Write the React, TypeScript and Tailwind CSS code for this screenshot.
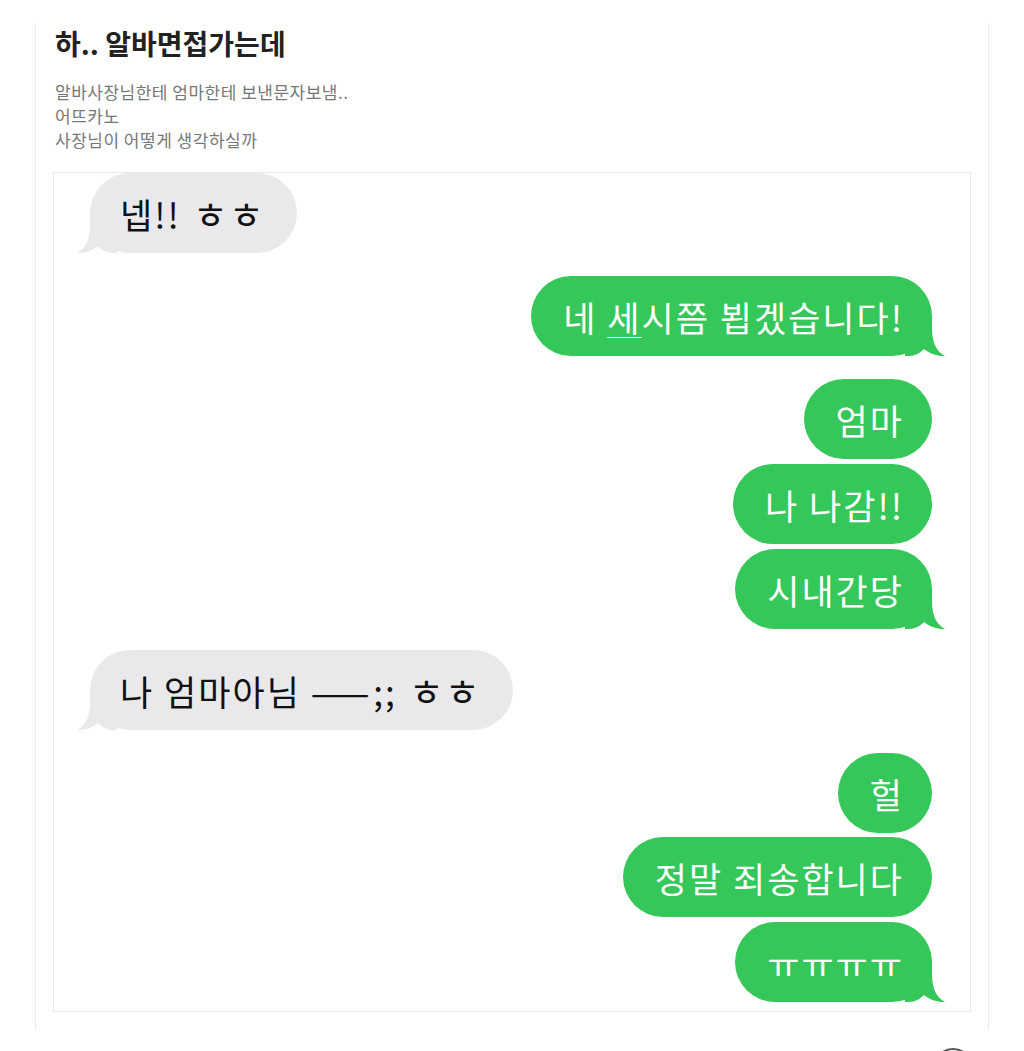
import type { ReactNode } from "react";

type Side = "left" | "right";

type Message = {
  side: Side;
  text: ReactNode;
  gap: string;
};

// compatibility jamo render small in Noto, so the laughing ㅎㅎ gets its own size
function Haha() {
  return <span className="ml-[12px] text-[38px] tracking-[1px]">ㅎㅎ</span>;
}

const messages: Message[] = [
  {
    side: "left",
    text: (
      <>
        넵!!
        <Haha />
      </>
    ),
    gap: "mt-0",
  },
  {
    side: "right",
    text: (
      <>
        네 <span className="underline decoration-1 underline-offset-[5px]">세</span>시쯤 뵙겠습니다!
      </>
    ),
    gap: "mt-[23px]",
  },
  { side: "right", text: "엄마", gap: "mt-[23px]" },
  { side: "right", text: "나 나감!!", gap: "mt-[5px]" },
  { side: "right", text: "시내간당", gap: "mt-[5px]" },
  {
    side: "left",
    text: (
      <>
        나 엄마아님 <span className="tracking-[4px]">——</span>;;
        <Haha />
      </>
    ),
    gap: "mt-[21px]",
  },
  { side: "right", text: "헐", gap: "mt-[23px]" },
  { side: "right", text: "정말 죄송합니다", gap: "mt-[4px]" },
  { side: "right", text: "ㅠㅠㅠㅠ", gap: "mt-[5px]" },
];

// bubbles that end a group get the little tail
const tailed = new Set([0, 1, 4, 5, 8]);

function Tail({ side }: { side: Side }) {
  if (side === "right") {
    return (
      <svg
        className="absolute bottom-0 right-[-13px] h-[40px] w-[40px]"
        viewBox="0 0 40 40"
        aria-hidden
      >
        <path
          d="M0 0 H27 V12 C27 26 31 35 40 40 C33 40.5 25 38 19 33 C15 37 10 40 4 40 H0 Z"
          fill="#35c759"
        />
      </svg>
    );
  }
  return (
    <svg
      className="absolute bottom-0 left-[-13px] h-[40px] w-[40px]"
      viewBox="0 0 40 40"
      aria-hidden
    >
      <path
        d="M40 0 H13 V12 C13 26 9 35 0 40 C7 40.5 15 38 21 33 C25 37 30 40 36 40 H40 Z"
        fill="#e9e9eb"
      />
    </svg>
  );
}

function Bubble({ message, tail }: { message: Message; tail: boolean }) {
  const isRight = message.side === "right";

  return (
    <div className={`flex ${isRight ? "justify-end pr-[38px]" : "justify-start pl-[36px]"} ${message.gap}`}>
      <div
        className={`relative flex h-[80px] items-center whitespace-pre rounded-full text-[35px] leading-none tracking-[2px] ${
          isRight ? "bg-[#35c759] pl-[32px] pr-[28px] text-white" : "bg-[#e9e9eb] pl-[30px] pr-[32px] text-[#111]"
        }`}
      >
        {tail && <Tail side={message.side} />}
        <span className="relative flex items-center">{message.text}</span>
      </div>
    </div>
  );
}

export default function App() {
  return (
    <div className="relative min-h-[1051px] overflow-hidden bg-white font-['Noto_Sans_CJK_KR','Noto_Sans',sans-serif]">
      <div className="ml-[35px] mt-[23px] h-[1007px] w-[954px] border-x border-[#ececec] px-[17px] pt-[3px]">
        <h1 className="ml-[2px] text-[28px] font-bold leading-[34px] text-[#222]">하.. 알바면접가는데</h1>

        <div className="ml-[2px] mt-[20px] text-[17px] leading-[24px] tracking-[0.5px] text-[#777]">
          <p>알바사장님한테 엄마한테 보낸문자보냄..</p>
          <p>어뜨카노</p>
          <p>사장님이 어떻게 생각하실까</p>
        </div>

        <div className="mt-[20px] h-[840px] overflow-hidden border border-[#e8e8e8] bg-white pb-[8px]">
          {messages.map((message, index) => (
            <Bubble key={index} message={message} tail={tailed.has(index)} />
          ))}
        </div>
      </div>

      <div className="absolute left-[933px] top-[1048px] h-[40px] w-[40px] rounded-full border-2 border-[#555]" />
    </div>
  );
}
